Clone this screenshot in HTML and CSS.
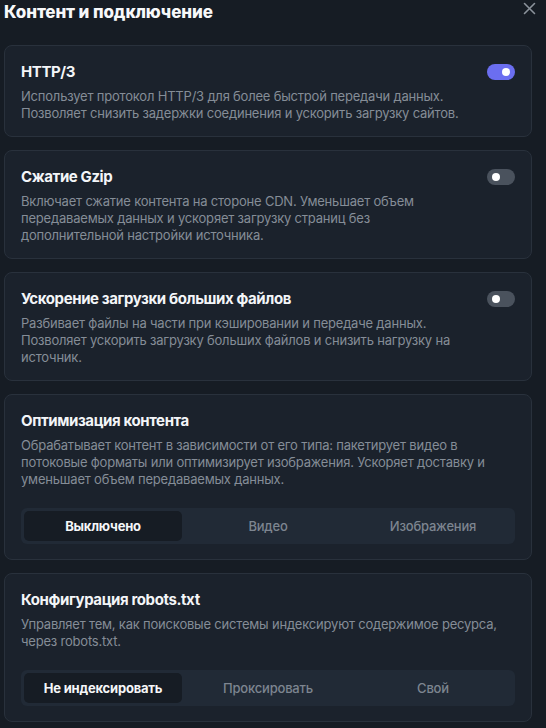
FILE: index.html
```html
<!DOCTYPE html>
<html lang="ru">
<head>
<meta charset="utf-8">
<link rel="stylesheet" href="styles.css">
</head>
<body>
<div class="panel">
  <header class="header">
    <h1 class="title">Контент и подключение</h1>
    <button class="close" aria-label="Закрыть">
      <svg width="13" height="13" viewBox="0 0 13 13"><path d="M1.5 1.5 L11.5 11.5 M11.5 1.5 L1.5 11.5" stroke="#8b929b" stroke-width="1.6" stroke-linecap="round" fill="none"/></svg>
    </button>
  </header>

  <section class="card">
    <div class="row">
      <h2 class="card-title">HTTP/3</h2>
      <span class="toggle on"><span class="knob"></span></span>
    </div>
    <p class="desc">Использует протокол HTTP/3 для более быстрой передачи данных.<br>Позволяет снизить задержки соединения и ускорить загрузку сайтов.</p>
  </section>

  <section class="card">
    <div class="row">
      <h2 class="card-title">Сжатие Gzip</h2>
      <span class="toggle"><span class="knob"></span></span>
    </div>
    <p class="desc">Включает сжатие контента на стороне CDN. Уменьшает объем<br>передаваемых данных и ускоряет загрузку страниц без<br>дополнительной настройки источника.</p>
  </section>

  <section class="card">
    <div class="row">
      <h2 class="card-title">Ускорение загрузки больших файлов</h2>
      <span class="toggle"><span class="knob"></span></span>
    </div>
    <p class="desc">Разбивает файлы на части при кэшировании и передаче данных.<br>Позволяет ускорить загрузку больших файлов и снизить нагрузку на<br>источник.</p>
  </section>

  <section class="card card-seg">
    <div class="row">
      <h2 class="card-title">Оптимизация контента</h2>
    </div>
    <p class="desc">Обрабатывает контент в зависимости от его типа: пакетирует видео в<br>потоковые форматы или оптимизирует изображения. Ускоряет доставку и<br>уменьшает объем передаваемых данных.</p>
    <div class="seg">
      <span class="seg-item active">Выключено</span>
      <span class="seg-item">Видео</span>
      <span class="seg-item">Изображения</span>
    </div>
  </section>

  <section class="card card-seg">
    <div class="row">
      <h2 class="card-title">Конфигурация robots.txt</h2>
    </div>
    <p class="desc">Управляет тем, как поисковые системы индексируют содержимое ресурса,<br>через robots.txt.</p>
    <div class="seg">
      <span class="seg-item active">Не индексировать</span>
      <span class="seg-item">Проксировать</span>
      <span class="seg-item">Свой</span>
    </div>
  </section>
</div>
</body>
</html>
```

FILE: styles.css
```css
* { box-sizing: border-box; }

html, body {
  margin: 0;
  padding: 0;
  background: #161c24;
}

body {
  font-family: Inter, "Noto Sans", sans-serif;
  color: #f1f3f6;
}

.panel {
  width: 546px;
  padding: 0 14px 0 4px;
  display: flex;
  flex-direction: column;
  gap: 13px;
}

.header {
  height: 32px;
  display: flex;
  align-items: flex-start;
  justify-content: space-between;
}

.title {
  margin: 0;
  font-size: 17px;
  line-height: 24px;
  font-weight: 800;
  letter-spacing: -0.1px;
  color: #f7f8fa;
}

.close {
  position: relative;
  left: 4px;
  margin: 2px 0 0;
  padding: 0;
  border: 0;
  background: none;
  width: 13px;
  height: 13px;
  display: block;
}

.close svg { display: block; }

.card {
  background: #1b222c;
  border: 1px solid #29313c;
  border-radius: 8px;
  padding: 16px 16px 14px;
}

.card-seg { padding-bottom: 15px; }

.row {
  display: flex;
  align-items: center;
  justify-content: space-between;
  height: 20px;
}

.card-title {
  margin: 0;
  font-size: 15px;
  line-height: 20px;
  font-weight: 700;
  letter-spacing: -0.4px;
  color: #f3f5f8;
}

.desc {
  margin: 6px 0 0;
  font-size: 13px;
  line-height: 17px;
  font-weight: 400;
  letter-spacing: -0.2px;
  color: #858d97;
}

.toggle {
  width: 28px;
  height: 16px;
  border-radius: 8px;
  background: #4a525d;
  display: flex;
  align-items: center;
  justify-content: flex-start;
  padding: 0 5px;
}

.toggle.on {
  background: #6b6ef0;
  justify-content: flex-end;
}

.knob {
  width: 8px;
  height: 8px;
  border-radius: 50%;
  background: #ffffff;
}

.seg {
  margin-top: 20px;
  height: 36px;
  padding: 3px;
  border-radius: 6px;
  background: #212a36;
  display: grid;
  grid-template-columns: 1fr 1fr 1fr;
  gap: 7px;
}

.seg-item {
  display: flex;
  align-items: center;
  justify-content: center;
  border-radius: 5px;
  font-size: 13px;
  font-weight: 500;
  letter-spacing: -0.2px;
  color: #7d8590;
}

.seg-item.active {
  background: #161c24;
  color: #f5f6f8;
  font-weight: 700;
}
```
